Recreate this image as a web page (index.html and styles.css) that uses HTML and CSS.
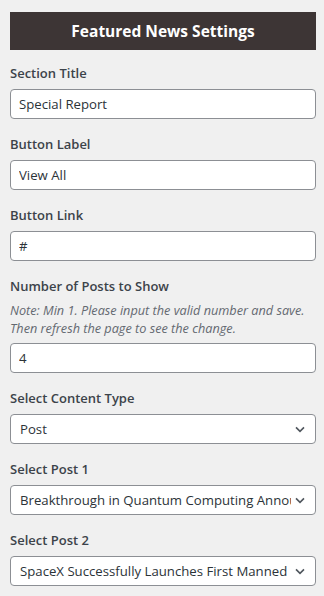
FILE: index.html
```html
<!DOCTYPE html>
<html lang="en">
<head>
    <meta charset="UTF-8">
    <meta name="viewport" content="width=device-width, initial-scale=1.0">
    <title>Featured News Settings</title>
    <link rel="stylesheet" href="styles.css">
</head>
<body>

    <div class="panel">
        <h2 class="panel-title">Featured News Settings</h2>

        <div class="field">
            <label for="section-title">Section Title</label>
            <input type="text" id="section-title" value="Special Report">
        </div>

        <div class="field">
            <label for="button-label">Button Label</label>
            <input type="text" id="button-label" value="View All">
        </div>

        <div class="field">
            <label for="button-link">Button Link</label>
            <input type="text" id="button-link" value="#">
        </div>

        <div class="field">
            <label for="posts-number">Number of Posts to Show</label>
            <p class="note">Note: Min 1. Please input the valid number and save. Then refresh the page to see the change.</p>
            <input type="text" id="posts-number" value="4">
        </div>

        <!-- Dropdowns -->
        <div class="field">
            <label for="content-type">Select Content Type</label>
            <div class="select-wrap">
                <select id="content-type">
                    <option>Post</option>
                </select>
                <svg class="chevron" viewBox="0 0 20 20"><path d="M5 8l5 5 5-5" /></svg>
            </div>
        </div>

        <div class="field">
            <label for="post-1">Select Post 1</label>
            <div class="select-wrap">
                <select id="post-1">
                    <option>Breakthrough in Quantum Computing Announced</option>
                </select>
                <svg class="chevron" viewBox="0 0 20 20"><path d="M5 8l5 5 5-5" /></svg>
            </div>
        </div>

        <div class="field">
            <label for="post-2">Select Post 2</label>
            <div class="select-wrap">
                <select id="post-2">
                    <option>SpaceX Successfully Launches First Manned Mission to Mars</option>
                </select>
                <svg class="chevron" viewBox="0 0 20 20"><path d="M5 8l5 5 5-5" /></svg>
            </div>
        </div>
    </div>

</body>
</html>
```

FILE: styles.css
```css
body {
    background-color: #f0f0f0;
    color: #3c434a;
    font-family: 'Open Sans', sans-serif;
    margin: 0;
    padding: 0;
}

.panel {
    padding: 12px 8px 0 10px;
}

.panel-title {
    background-color: #3d3535;
    color: #ffffff;
    font-size: 15.5px;
    font-weight: 700;
    line-height: 38px;
    height: 38px;
    margin: 0 0 13px;
    text-align: center;
}

.field {
    margin-bottom: 15px;
}

.field label {
    display: block;
    font-size: 13px;
    font-weight: 600;
    line-height: 20px;
    margin-bottom: 6px;
    color: #3c434a;
}

.note {
    font-size: 12.7px;
    font-style: italic;
    line-height: 18px;
    color: #646970;
    margin: -1px 0 6px;
}

.field input,
.field select {
    display: block;
    width: 100%;
    box-sizing: border-box;
    height: 30px;
    margin: 0;
    padding: 0 8px;
    font-family: 'Open Sans', sans-serif;
    font-size: 13.2px;
    color: #2c3338;
    background-color: #ffffff;
    border: 1px solid #8c8f94;
    border-radius: 4px;
    outline: none;
}

.select-wrap {
    position: relative;
}

.field select {
    appearance: none;
    -webkit-appearance: none;
    padding: 0 24px 0 9px;
}

.chevron {
    position: absolute;
    right: 8px;
    top: 7px;
    width: 16px;
    height: 16px;
    fill: none;
    stroke: #50575e;
    stroke-width: 2;
    pointer-events: none;
}
```
